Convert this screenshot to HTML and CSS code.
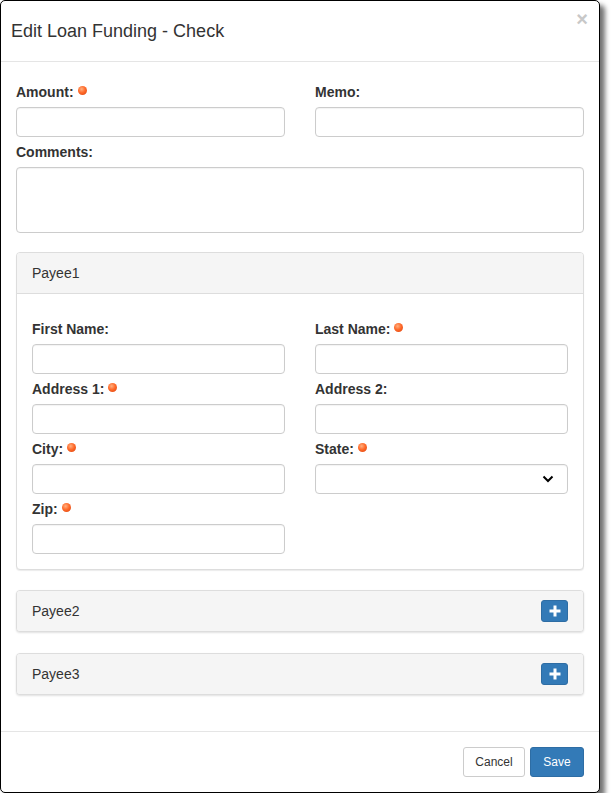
FILE: index.html
```html
<!DOCTYPE html>
<html>
<head>
<meta charset="utf-8">
<link rel="stylesheet" href="styles.css">
</head>
<body>
<div class="modal">
  <div class="modal-header">
    <h4 class="modal-title">Edit Loan Funding - Check</h4>
    <span class="close">&times;</span>
  </div>
  <div class="modal-body">
    <div class="row">
      <div class="group">
        <label class="lbl">Amount:<span class="req"></span></label>
        <input class="ctrl" type="text">
      </div>
      <div class="group">
        <label class="lbl">Memo:</label>
        <input class="ctrl" type="text">
      </div>
    </div>
    <div class="group group-comments">
      <label class="lbl">Comments:</label>
      <textarea class="ctrl area"></textarea>
    </div>

    <div class="panel panel-open">
      <div class="panel-heading">Payee1</div>
      <div class="panel-body">
        <div class="row">
          <div class="group">
            <label class="lbl">First Name:</label>
            <input class="ctrl" type="text">
          </div>
          <div class="group">
            <label class="lbl">Last Name:<span class="req"></span></label>
            <input class="ctrl" type="text">
          </div>
        </div>
        <div class="row">
          <div class="group">
            <label class="lbl">Address 1:<span class="req"></span></label>
            <input class="ctrl" type="text">
          </div>
          <div class="group">
            <label class="lbl">Address 2:</label>
            <input class="ctrl" type="text">
          </div>
        </div>
        <div class="row">
          <div class="group">
            <label class="lbl">City:<span class="req"></span></label>
            <input class="ctrl" type="text">
          </div>
          <div class="group">
            <label class="lbl">State:<span class="req"></span></label>
            <div class="select-wrap">
              <select class="ctrl sel"><option></option></select>
              <svg class="chev" width="12" height="8" viewBox="0 0 12 8"><path d="M1.5 1.5 L6 6 L10.5 1.5" fill="none" stroke="#000" stroke-width="2"/></svg>
            </div>
          </div>
        </div>
        <div class="row">
          <div class="group">
            <label class="lbl">Zip:<span class="req"></span></label>
            <input class="ctrl" type="text">
          </div>
        </div>
      </div>
    </div>

    <div class="panel panel-closed">
      <div class="panel-heading heading-flex">
        <span>Payee2</span>
        <button class="btn-plus" type="button"><svg width="12" height="12" viewBox="0 0 12 12"><rect x="4.5" y="0.5" width="3" height="11" fill="#fff"/><rect x="0.5" y="4.5" width="11" height="3" fill="#fff"/></svg></button>
      </div>
    </div>
    <div class="panel panel-closed">
      <div class="panel-heading heading-flex">
        <span>Payee3</span>
        <button class="btn-plus" type="button"><svg width="12" height="12" viewBox="0 0 12 12"><rect x="4.5" y="0.5" width="3" height="11" fill="#fff"/><rect x="0.5" y="4.5" width="11" height="3" fill="#fff"/></svg></button>
      </div>
    </div>
  </div>
  <div class="modal-footer">
    <button class="btn btn-default" type="button">Cancel</button>
    <button class="btn btn-primary" type="button">Save</button>
  </div>
</div>
</body>
</html>
```
FILE: styles.css
```css
* { box-sizing: border-box; }
html, body { margin: 0; padding: 0; background: #fff; }
body {
  font-family: "Liberation Sans", Arial, sans-serif;
  font-size: 14px;
  color: #333;
}
.modal {
  width: 600px;
  border: 1px solid #000;
  border-radius: 5px;
  background: #fff;
  box-shadow: 5px 5px 5px rgba(0, 0, 0, 0.55);
}
.modal-header {
  height: 61px;
  border-bottom: 1px solid #e5e5e5;
  padding: 0 10px;
  display: flex;
  align-items: center;
  position: relative;
}
.modal-title {
  margin: 0;
  font-size: 18px;
  font-weight: normal;
  color: #333;
  line-height: 20px;
}
.close {
  position: absolute;
  right: 11px;
  top: 8px;
  font-size: 20px;
  font-weight: bold;
  line-height: 1;
  color: #c8c8c8;
}
.modal-body {
  padding: 21px 15px 15px;
}
.row {
  display: grid;
  grid-template-columns: 1fr 1fr;
  column-gap: 30px;
}
.group {
  margin-bottom: 6px;
}
.lbl {
  display: flex;
  align-items: center;
  height: 20px;
  line-height: 18px;
  padding-bottom: 2px;
  font-weight: bold;
  margin-bottom: 4px;
  color: #333;
}
.req {
  display: inline-block;
  width: 9px;
  height: 9px;
  margin-left: 4px;
  margin-top: -3px;
  border-radius: 50%;
  background: radial-gradient(circle at 40% 35%, #ffb080 0%, #ff6a2a 45%, #d8400c 100%);
}
.ctrl {
  display: block;
  width: 100%;
  height: 30px;
  border: 1px solid #ccc;
  border-radius: 4px;
  background: #fff;
  font-family: inherit;
  font-size: 14px;
  padding: 4px 10px;
  margin: 0;
  box-shadow: inset 0 1px 1px rgba(0, 0, 0, 0.05);
}
.area {
  height: 66px;
  resize: none;
}
.group-comments {
  margin-bottom: 19px;
}
.select-wrap {
  position: relative;
}
.sel {
  -webkit-appearance: none;
  appearance: none;
}
.chev {
  position: absolute;
  right: 14px;
  top: 11px;
  pointer-events: none;
}
.panel {
  border: 1px solid #ddd;
  border-radius: 4px;
  background: #fff;
  margin-bottom: 20px;
  box-shadow: 0 1px 1px rgba(0, 0, 0, 0.08);
}
.panel-closed {
  margin-bottom: 21px;
  box-shadow: 0 1px 2px rgba(0, 0, 0, 0.12);
}
.panel-heading {
  height: 40px;
  padding: 0 15px;
  background: #f5f5f5;
  border-radius: 3px 3px 0 0;
  display: flex;
  align-items: center;
  color: #333;
}
.panel-open .panel-heading {
  height: 41px;
  border-bottom: 1px solid #ddd;
}
.panel-closed .panel-heading {
  border-radius: 3px;
}
.heading-flex {
  justify-content: space-between;
}
.panel-body {
  padding: 26px 15px 9px;
}
.btn-plus {
  width: 27px;
  height: 22px;
  padding: 0;
  margin: 0;
  border: 1px solid #2e6da4;
  border-radius: 3px;
  background: #337ab7;
  display: flex;
  align-items: center;
  justify-content: center;
}
.modal-footer {
  border-top: 1px solid #e5e5e5;
  padding: 15px;
  display: flex;
  justify-content: flex-end;
  gap: 5px;
}
.btn {
  height: 30px;
  padding: 0 12px;
  font-family: inherit;
  font-size: 12px;
  border-radius: 3px;
  border: 1px solid;
  margin: 0;
}
.btn-default {
  width: 62px;
  padding: 0;
  background: #fff;
  border-color: #ccc;
  color: #333;
}
.btn-primary {
  width: 54px;
  padding: 0;
  background: #337ab7;
  border-color: #2e6da4;
  color: #fff;
}
```
